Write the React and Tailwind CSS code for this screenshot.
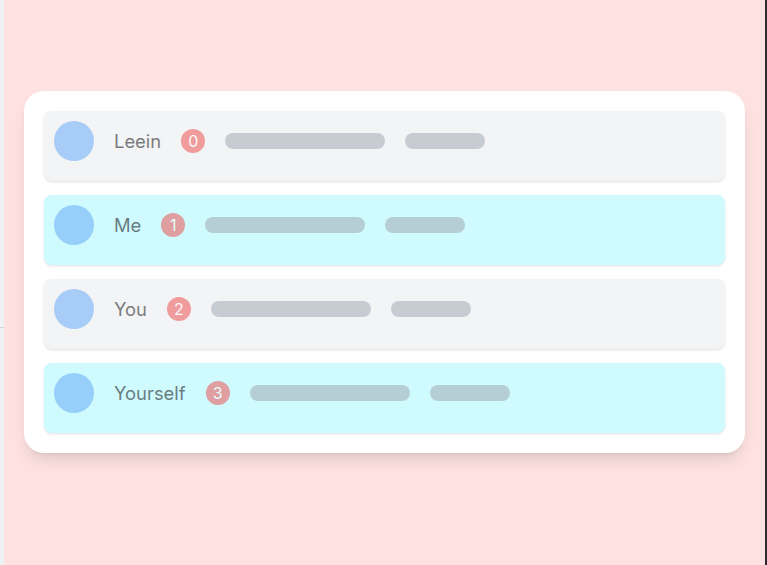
import React from 'react';

const people = [
  { name: 'Leein', count: 0, tone: 'bg-[#f3f4f6]' },
  { name: 'Me', count: 1, tone: 'bg-[#cffafe]' },
  { name: 'You', count: 2, tone: 'bg-[#f3f4f6]' },
  { name: 'Yourself', count: 3, tone: 'bg-[#cffafe]' },
];

const Row = ({ name, count, tone }) => (
  <div className={`h-[70px] rounded-lg shadow-sm flex items-start pt-[10px] px-[10px] ${tone}`}>
    <div className="flex items-center gap-5 opacity-50">
      <div className="w-10 h-10 rounded-full bg-[#60a5fa]" />
      <span className="text-[18.4px] text-black leading-none">{name}</span>
      <span className="w-6 h-6 rounded-full bg-[#ef4444] text-white text-[16px] flex items-center justify-center leading-none">
        {count}
      </span>
      <div className="w-40 h-4 rounded-full bg-[#9ca3af]" />
      <div className="w-20 h-4 rounded-full bg-[#9ca3af]" />
    </div>
  </div>
);

export default function App() {
  return (
    <div
      className="flex w-full h-[565px] overflow-hidden"
      style={{ fontFamily: 'Inter, "Liberation Sans", Arial, sans-serif' }}
    >
      {/* left edge strip */}
      <div className="w-1 shrink-0 bg-[#eef2f6] flex flex-col">
        <div className="h-[327px]" />
        <div className="h-px bg-gray-300" />
      </div>

      {/* main pink area */}
      <div className="flex-1 bg-[#fee2e2] px-5 pt-[91px]">
        <div className="bg-white rounded-[20px] shadow-lg p-5 flex flex-col gap-3.5">
          {people.map((p) => (
            <Row key={p.name} {...p} />
          ))}
        </div>
      </div>

      {/* right edge */}
      <div className="w-0.5 shrink-0 bg-[#2c2a33]" />
    </div>
  );
}
